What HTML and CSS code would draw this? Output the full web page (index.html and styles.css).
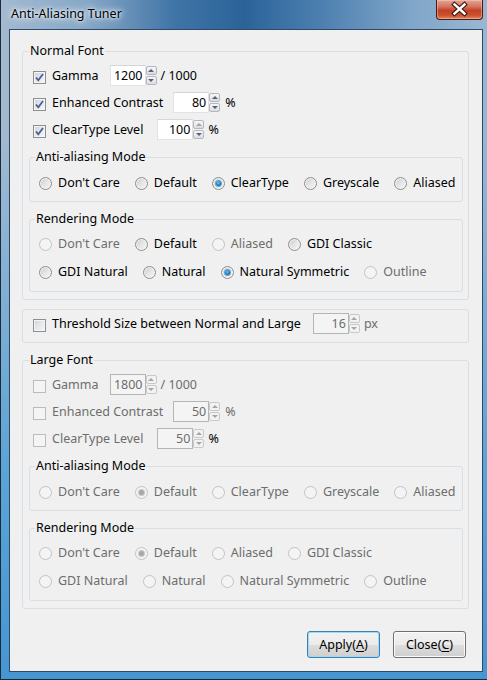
FILE: index.html
```html
<!DOCTYPE html>
<html>
<head>
<meta charset="utf-8">
<link rel="stylesheet" href="styles.css">
</head>
<body>
<div class="window">
  <div class="titlebar">
    <span class="title">Anti-Aliasing Tuner</span>
    <div class="close-btn">
      <svg width="47" height="20" viewBox="0 0 47 20">
        <path d="M18.5 5.5 L28.5 14.5 M28.5 5.5 L18.5 14.5" stroke="#3a1712" stroke-width="4.6" stroke-linecap="square" fill="none"/>
        <path d="M18.5 5.5 L28.5 14.5 M28.5 5.5 L18.5 14.5" stroke="#ffffff" stroke-width="2.4" stroke-linecap="square" fill="none"/>
      </svg>
    </div>
  </div>
  <div class="client">
    <fieldset class="group main">
      <legend>Normal Font</legend>
      <div class="rows">
        <div class="row">
          <span class="cb checked"><svg width="11" height="11" viewBox="0 0 11 11"><path d="M2 5.5 L4.3 8.3 L9 2" stroke="#4a5f97" stroke-width="1.8" fill="none"/></svg></span>
          <span class="lbl">Gamma</span>
          <div class="spin"><span class="edit">1200</span><span class="arrows"><span class="ab up"></span><span class="ab down"></span></span></div>
          <span class="suffix">/ 1000</span>
        </div>
        <div class="row">
          <span class="cb checked"><svg width="11" height="11" viewBox="0 0 11 11"><path d="M2 5.5 L4.3 8.3 L9 2" stroke="#4a5f97" stroke-width="1.8" fill="none"/></svg></span>
          <span class="lbl lbl-ec">Enhanced Contrast</span>
          <div class="spin"><span class="edit">80</span><span class="arrows"><span class="ab up"></span><span class="ab down"></span></span></div>
          <span class="suffix pct">%</span>
        </div>
        <div class="row">
          <span class="cb checked"><svg width="11" height="11" viewBox="0 0 11 11"><path d="M2 5.5 L4.3 8.3 L9 2" stroke="#4a5f97" stroke-width="1.8" fill="none"/></svg></span>
          <span class="lbl lbl-ct">ClearType Level</span>
          <div class="spin"><span class="edit">100</span><span class="arrows"><span class="ab up off"></span><span class="ab down"></span></span></div>
          <span class="suffix">%</span>
        </div>
      </div>
      <fieldset class="group sub">
        <legend>Anti-aliasing Mode</legend>
        <div class="radio-row">
          <span class="opt"><span class="radio"></span>Don't Care</span>
          <span class="opt"><span class="radio"></span>Default</span>
          <span class="opt"><span class="radio on"></span>ClearType</span>
          <span class="opt"><span class="radio"></span>Greyscale</span>
          <span class="opt"><span class="radio"></span>Aliased</span>
        </div>
      </fieldset>
      <fieldset class="group sub">
        <legend>Rendering Mode</legend>
        <div class="radio-rows">
          <div class="radio-row">
            <span class="opt dis"><span class="radio"></span>Don't Care</span>
            <span class="opt"><span class="radio"></span>Default</span>
            <span class="opt dis"><span class="radio"></span>Aliased</span>
            <span class="opt"><span class="radio"></span>GDI Classic</span>
          </div>
          <div class="radio-row">
            <span class="opt"><span class="radio"></span>GDI Natural</span>
            <span class="opt"><span class="radio"></span>Natural</span>
            <span class="opt"><span class="radio on"></span>Natural Symmetric</span>
            <span class="opt dis"><span class="radio"></span>Outline</span>
          </div>
        </div>
      </fieldset>
    </fieldset>

    <fieldset class="group thresh">
      <div class="row">
        <span class="cb"></span>
        <span class="lbl lbl-th">Threshold Size between Normal and Large</span>
        <div class="spin dis"><span class="edit">16</span><span class="arrows"><span class="ab up off"></span><span class="ab down off"></span></span></div>
        <span class="suffix grey">px</span>
      </div>
    </fieldset>

    <fieldset class="group main large">
      <legend>Large Font</legend>
      <div class="rows">
        <div class="row">
          <span class="cb dis"></span>
          <span class="lbl grey">Gamma</span>
          <div class="spin dis"><span class="edit">1800</span><span class="arrows"><span class="ab up off"></span><span class="ab down off"></span></span></div>
          <span class="suffix grey">/ 1000</span>
        </div>
        <div class="row">
          <span class="cb dis"></span>
          <span class="lbl lbl-ec grey">Enhanced Contrast</span>
          <div class="spin dis"><span class="edit">50</span><span class="arrows"><span class="ab up off"></span><span class="ab down off"></span></span></div>
          <span class="suffix pct grey">%</span>
        </div>
        <div class="row">
          <span class="cb dis"></span>
          <span class="lbl lbl-ct grey">ClearType Level</span>
          <div class="spin dis"><span class="edit">50</span><span class="arrows"><span class="ab up off"></span><span class="ab down off"></span></span></div>
          <span class="suffix">%</span>
        </div>
      </div>
      <fieldset class="group sub">
        <legend>Anti-aliasing Mode</legend>
        <div class="radio-row">
          <span class="opt dis"><span class="radio"></span>Don't Care</span>
          <span class="opt dis"><span class="radio on"></span>Default</span>
          <span class="opt dis"><span class="radio"></span>ClearType</span>
          <span class="opt dis"><span class="radio"></span>Greyscale</span>
          <span class="opt dis"><span class="radio"></span>Aliased</span>
        </div>
      </fieldset>
      <fieldset class="group sub">
        <legend>Rendering Mode</legend>
        <div class="radio-rows">
          <div class="radio-row">
            <span class="opt dis"><span class="radio"></span>Don't Care</span>
            <span class="opt dis"><span class="radio on"></span>Default</span>
            <span class="opt dis"><span class="radio"></span>Aliased</span>
            <span class="opt dis"><span class="radio"></span>GDI Classic</span>
          </div>
          <div class="radio-row">
            <span class="opt dis"><span class="radio"></span>GDI Natural</span>
            <span class="opt dis"><span class="radio"></span>Natural</span>
            <span class="opt dis"><span class="radio"></span>Natural Symmetric</span>
            <span class="opt dis"><span class="radio"></span>Outline</span>
          </div>
        </div>
      </fieldset>
    </fieldset>

    <div class="buttons">
      <button class="btn default">Apply(<u>A</u>)</button>
      <button class="btn">Close(<u>C</u>)</button>
    </div>
  </div>
</div>
</body>
</html>
```
FILE: styles.css
```css
html, body {
  margin: 0;
  padding: 0;
  background: #6f9cc4;
}
body {
  font-family: "Noto Sans", "Liberation Sans", sans-serif;
  font-size: 12.5px;
  color: #000;
}
.window {
  width: 487px;
  height: 680px;
  box-sizing: border-box;
  border-left: 1px solid #1a2a3b;
  border-bottom: 1px solid #1a2a3b;
  padding: 0 4px 7px 8px;
  display: flex;
  flex-direction: column;
  background:
    linear-gradient(180deg, rgba(80,165,220,0) 0%, rgba(80,165,220,0) 20%, rgba(78,160,215,0.85) 70%, rgba(70,150,210,1) 100%),
    linear-gradient(90deg, #a3bad0 0%, #86a7c6 18%, #3f74a6 36%, #2b6399 50%, #4d80b0 66%, #7fa5c8 84%, #9ab7d2 100%);
}
.titlebar {
  height: 29px;
  flex: none;
  display: flex;
  align-items: flex-start;
}
.title {
  margin: 6px 0 0 0;
  line-height: 16px;
  font-size: 12.5px;
  padding: 0 2px;
  color: #000;
  text-shadow: 0 0 6px #e8f0f8, 0 0 10px #dde8f3, 0 0 3px #ffffff;
}
.close-btn {
  margin-left: auto;
  width: 47px;
  height: 20px;
  box-sizing: border-box;
  border: 1px solid #4a1a12;
  border-top: 0;
  border-radius: 0 0 4px 4px;
  background: linear-gradient(180deg, #e2a896 0%, #d4735f 35%, #c44127 55%, #c9502f 80%, #de8a63 100%);
  box-shadow: inset 0 0 0 1px rgba(255,210,190,0.45);
}
.close-btn svg { display: block; margin: -1px 0 0 -1px; }

.client {
  flex: 1;
  border: 1px solid #2e4a66;
  background: #f0f0f0;
  display: flex;
  flex-direction: column;
}

/* group boxes */
.group {
  margin: 0;
  min-width: 0;
  border: 1px solid #d5dfe5;
  border-radius: 3px;
}
.group legend {
  padding: 0 1px;
  line-height: 16px;
  color: #000;
}
.main {
  margin: 13px 13px 0 12px;
  padding: 6px 5px 7px 6px;
}
.large { margin-top: 9px; }
.sub {
  margin: 9px 0 0 0;
  padding: 7px 5px 9px 5px;
}
.sub + .sub {
  padding: 6px 5px 10px 5px;
}
.thresh {
  margin: 9px 13px 0 12px;
  padding: 3px 5px 8px 10px;
}

/* rows with checkboxes and spin boxes */
.rows {
  display: flex;
  flex-direction: column;
  gap: 6px;
  margin-left: 4px;
}
.row {
  display: flex;
  align-items: center;
  height: 21px;
}
.cb {
  width: 13px;
  height: 13px;
  box-sizing: border-box;
  border: 1px solid #8e8f8f;
  background: linear-gradient(135deg, #cbcfd5 0%, #e6e8eb 50%, #f6f6f6 100%);
  box-shadow: inset 0 0 0 1px #f4f4f4;
  margin: 3px 6px 0 0;
  flex: none;
  display: flex;
  align-items: center;
  justify-content: center;
}
.cb svg { display: block; }
.cb.dis {
  border-color: #bcbcbc;
  background: #f4f4f4;
  box-shadow: none;
}
.lbl { margin-right: 11px; white-space: nowrap; }
.lbl-ec { margin-right: 10px; }
.lbl-ct { margin-right: 14px; }
.lbl-th { margin-right: 12px; }
.grey { color: #6d6d6d; }

.spin {
  display: flex;
  align-items: center;
  height: 21px;
}
.edit {
  width: 36px;
  height: 21px;
  box-sizing: border-box;
  border: 1px solid #dfe2e7;
  border-top-color: #d3d6db;
  background: #fff;
  text-align: right;
  padding-right: 2px;
  line-height: 19px;
}
.spin.dis .edit {
  border-color: #b5b5b5;
  background: #f4f4f4;
  color: #6d6d6d;
}
.arrows {
  width: 11px;
  height: 19px;
  display: flex;
  flex-direction: column;
  gap: 1px;
}
.ab {
  flex: 1;
  box-sizing: border-box;
  border: 1px solid #b4b7bb;
  border-radius: 2px;
  background: linear-gradient(180deg, #f7f7f7 0%, #ebebeb 50%, #dcdcdc 100%);
  display: flex;
  align-items: center;
  justify-content: center;
}
.ab::after {
  content: "";
  width: 0;
  height: 0;
  border-left: 3px solid transparent;
  border-right: 3px solid transparent;
}
.ab.up::after { border-bottom: 3px solid #4d6185; }
.ab.down::after { border-top: 3px solid #4d6185; }
.ab.up.off::after { border-bottom-color: #a5a5a5; }
.ab.down.off::after { border-top-color: #a5a5a5; }
.spin.dis .ab { border-color: #c9c9c9; background: #f2f2f2; }
.suffix { margin-left: 4px; }
.suffix.pct { margin-left: 5px; }

/* radios */
.radio-rows {
  display: flex;
  flex-direction: column;
  gap: 8px;
}
.radio-row {
  display: flex;
  align-items: center;
  height: 20px;
  margin-left: 4px;
}
.opt {
  display: flex;
  align-items: center;
  margin-right: 15px;
  white-space: nowrap;
}
.radio {
  width: 13px;
  height: 13px;
  box-sizing: border-box;
  border-radius: 50%;
  border: 1px solid #8e8f8f;
  background: linear-gradient(135deg, #c9cbce 0%, #e4e5e7 50%, #f8f8f8 100%);
  box-shadow: inset 0 0 0 1px #f2f2f2;
  margin: 3px 6px 0 0;
  flex: none;
  display: flex;
  align-items: center;
  justify-content: center;
}
.radio.on::after {
  content: "";
  width: 5px;
  height: 5px;
  border-radius: 50%;
  background: radial-gradient(circle at 45% 40%, #8fd0f6 0%, #2a7fc2 45%, #0d4a85 100%);
  box-shadow: 0 0 0 1px #5aa6dc;
}
.opt.dis { color: #6d6d6d; }
.opt.dis .radio {
  border-color: #c2c3c3;
  background: #f4f4f4;
  box-shadow: none;
}
.opt.dis .radio.on::after {
  background: #a8a8a8;
  box-shadow: 0 0 0 1px #c8c8c8;
}

/* buttons */
.buttons {
  display: flex;
  justify-content: flex-end;
  gap: 13px;
  margin-top: 22px;
  padding-right: 16px;
}
.btn {
  width: 73px;
  height: 27px;
  box-sizing: border-box;
  border: 1px solid #707070;
  border-radius: 3px;
  background: linear-gradient(180deg, #f2f2f2 0%, #ebebeb 50%, #dddddd 51%, #cfcfcf 100%);
  box-shadow: inset 0 0 0 1px #fbfbfb;
  font-family: inherit;
  font-size: 12.5px;
  color: #000;
  padding: 0;
}
.btn.default {
  border-color: #3c7fb1;
  box-shadow: inset 0 0 0 1px #9fdaf5;
}
.btn u { text-underline-offset: 2px; }
```
